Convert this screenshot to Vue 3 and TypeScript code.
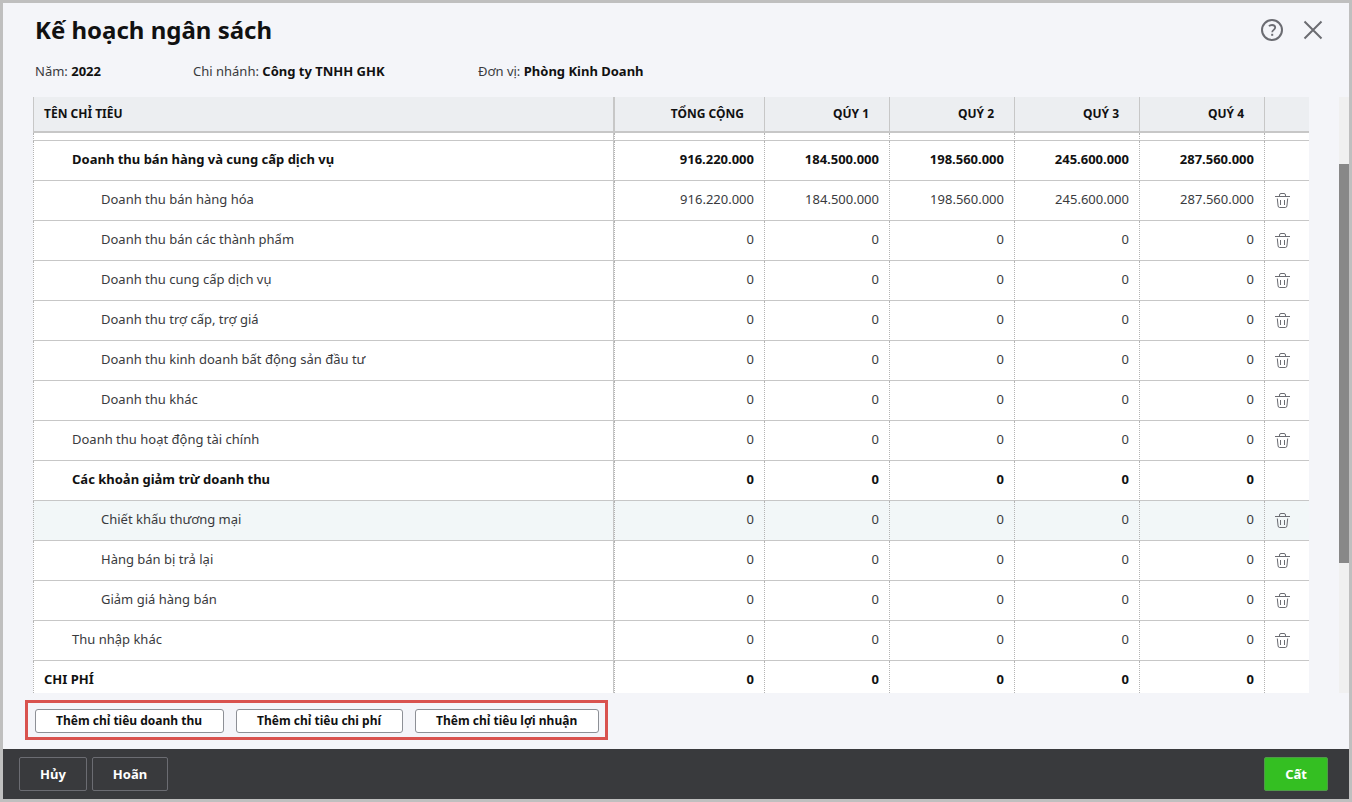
<script setup lang="ts">
interface Row {
  name: string
  level: 0 | 1 | 2
  values: string[]
  bold?: boolean
  active?: boolean
}

const zeros: string[] = ['0', '0', '0', '0', '0']
const sales: string[] = ['916.220.000', '184.500.000', '198.560.000', '245.600.000', '287.560.000']

const columns: string[] = ['TỔNG CỘNG', 'QÚY 1', 'QUÝ 2', 'QUÝ 3', 'QUÝ 4']

const rows: Row[] = [
  { name: 'Doanh thu bán hàng và cung cấp dịch vụ', level: 1, values: sales, bold: true },
  { name: 'Doanh thu bán hàng hóa', level: 2, values: sales },
  { name: 'Doanh thu bán các thành phẩm', level: 2, values: zeros },
  { name: 'Doanh thu cung cấp dịch vụ', level: 2, values: zeros },
  { name: 'Doanh thu trợ cấp, trợ giá', level: 2, values: zeros },
  { name: 'Doanh thu kinh doanh bất động sản đầu tư', level: 2, values: zeros },
  { name: 'Doanh thu khác', level: 2, values: zeros },
  { name: 'Doanh thu hoạt động tài chính', level: 1, values: zeros },
  { name: 'Các khoản giảm trừ doanh thu', level: 1, values: zeros, bold: true },
  { name: 'Chiết khấu thương mại', level: 2, values: zeros, active: true },
  { name: 'Hàng bán bị trả lại', level: 2, values: zeros },
  { name: 'Giảm giá hàng bán', level: 2, values: zeros },
  { name: 'Thu nhập khác', level: 1, values: zeros },
  { name: 'CHI PHÍ', level: 0, values: zeros, bold: true },
]

const addButtons: string[] = ['Thêm chỉ tiêu doanh thu', 'Thêm chỉ tiêu chi phí', 'Thêm chỉ tiêu lợi nhuận']
</script>

<template>
  <div class="window">
    <header class="titlebar">
      <h1>Kế hoạch ngân sách</h1>
      <div class="tools">
        <button type="button" class="icon-btn" aria-label="Trợ giúp">
          <svg width="24" height="24" viewBox="0 0 24 24" fill="none" stroke="#6b6c72" stroke-width="2">
            <circle cx="12" cy="12" r="10" />
            <path d="M9 8.3C9.5 7.6 10.5 7 12 7C14 7 15.2 8 15.2 9.6C15.2 11.8 12.2 11.9 12.2 14.2" stroke-width="1.8" />
            <path d="M12.2 15.8V17.8" />
          </svg>
        </button>
        <button type="button" class="icon-btn" aria-label="Đóng">
          <svg width="24" height="24" viewBox="0 0 24 24" fill="none" stroke="#6b6c72" stroke-width="2">
            <path d="M3.5 3.5L20.5 20.5M20.5 3.5L3.5 20.5" />
          </svg>
        </button>
      </div>
    </header>

    <div class="info">
      <span class="info-year">Năm: <b>2022</b></span>
      <span class="info-branch">Chi nhánh: <b>Công ty TNHH GHK</b></span>
      <span>Đơn vị: <b>Phòng Kinh Doanh</b></span>
    </div>

    <main class="content">
      <div class="table-view">
        <table>
          <colgroup>
            <col />
            <col class="col-total" />
            <col v-for="n in 4" :key="n" class="col-quarter" />
            <col class="col-action" />
          </colgroup>
          <thead>
            <tr>
              <th scope="col" class="name">TÊN CHỈ TIÊU</th>
              <th v-for="c in columns" :key="c" scope="col" class="num">{{ c }}</th>
              <th></th>
            </tr>
          </thead>
          <tbody>
            <tr class="clipped" aria-hidden="true">
              <td class="name"></td>
              <td v-for="n in 6" :key="n"></td>
            </tr>
            <tr v-for="row in rows" :key="row.name" :class="{ bold: row.bold, active: row.active }">
              <td class="name" :class="'level-' + row.level">{{ row.name }}</td>
              <td v-for="(v, i) in row.values" :key="i" class="num">{{ v }}</td>
              <td class="action">
                <button v-if="!row.bold" type="button" class="trash" :aria-label="'Xóa ' + row.name">
                  <svg width="15" height="15" viewBox="0 0 15 15" fill="none" stroke="#6b6c72">
                    <path d="M0 3.5H15M4.5 3.5V2Q4.5 0.5 6 0.5H9Q10.5 0.5 10.5 2V3.5" />
                    <path d="M2.3 5.5L3.1 13Q3.3 14.5 4.7 14.5H10.3Q11.7 14.5 11.9 13L12.7 5.5M5.5 7V12M9.5 7V12" />
                  </svg>
                </button>
              </td>
            </tr>
          </tbody>
        </table>
      </div>
      <div class="scrollbar"><div class="thumb"></div></div>
    </main>

    <div class="add-bar">
      <div class="add-group">
        <button v-for="b in addButtons" :key="b" type="button" class="add-btn">{{ b }}</button>
      </div>
    </div>

    <footer class="footer">
      <button type="button" class="foot-btn">Hủy</button>
      <button type="button" class="foot-btn">Hoãn</button>
      <button type="button" class="foot-btn save">Cất</button>
    </footer>
  </div>
</template>

<style>
body {
  margin: 0;
}
</style>

<style scoped>
.window {
  box-sizing: border-box;
  height: 100vh;
  display: flex;
  flex-direction: column;
  overflow: hidden;
  border: 3px solid #bfbfbf;
  background: #f4f5f9;
  color: #393a3d;
  font-family: "Noto Sans", sans-serif;
  font-size: 13px;
  line-height: 18px;
}

button {
  box-sizing: border-box;
  font: inherit;
  cursor: pointer;
}

.titlebar {
  display: flex;
  justify-content: space-between;
  align-items: center;
  height: 54px;
  padding: 0 24px 0 32px;
}

h1 {
  margin: 0;
  font-size: 24px;
  line-height: 32px;
  font-weight: 700;
  color: #111;
}

.tools {
  display: flex;
  gap: 17px;
}

.icon-btn,
.trash {
  display: block;
  padding: 0;
  border: 0;
  background: none;
}

svg {
  display: block;
}

.info {
  display: flex;
  padding: 5px 32px 17px;
}

.info-year {
  width: 158px;
}

.info-branch {
  width: 285px;
}

b {
  font-weight: 700;
  color: #111;
}

.content {
  flex: 1;
  min-height: 0;
  display: flex;
  gap: 30px;
  padding-left: 30px;
}

.table-view {
  flex: 1;
  min-width: 0;
  overflow: hidden;
  background: #fff;
}

table {
  width: 100%;
  table-layout: fixed;
  border-collapse: separate;
  border-spacing: 0;
}

.col-total {
  width: 150px;
}

.col-quarter {
  width: 125px;
}

.col-action {
  width: 45px;
}

th,
td {
  box-sizing: border-box;
  padding: 0 10px;
}

th {
  height: 36px;
  border-bottom: 2px solid #c7c7c7;
  border-left: 1px solid #c7c7c7;
  background: #eceef1;
  font-size: 12px;
  font-weight: 700;
  color: #111;
  text-align: left;
}

th.num {
  padding-right: 20px;
}

td {
  height: 40px;
  padding-bottom: 4px;
  border-bottom: 1px solid #c7c7c7;
  border-left: 1px dotted #b4b4b4;
}

.name {
  border-right: 1px solid #c7c7c7;
}

.num {
  text-align: right;
}

.level-1 {
  padding-left: 38px;
}

.level-2 {
  padding-left: 67px;
}

.clipped td {
  height: 8px;
  padding: 0;
}

.bold td {
  font-weight: 700;
  color: #111;
}

.active td {
  background: #f2f7f8;
}

.action {
  padding: 0 10px;
}

.scrollbar {
  width: 10px;
  display: flex;
  flex-direction: column;
  background: #f0f0f0;
}

.thumb {
  height: 67%;
  margin-top: 67px;
  background: #888;
}

.add-bar {
  display: flex;
  padding: 7px 22px 9px;
}

.add-group {
  display: flex;
  gap: 12px;
  padding: 6px 6px 4px 7px;
  border: 3px solid #d9534f;
}

.add-btn {
  height: 24px;
  padding: 0 21px 0 20px;
  border: 1px solid #8d9096;
  border-radius: 3px;
  background: #fff;
  color: #111;
  font-size: 12px;
  line-height: 18px;
  font-weight: 700;
}

.footer {
  display: flex;
  align-items: center;
  gap: 5px;
  height: 50px;
  padding: 0 21px 0 16px;
  background: #393a3d;
}

.foot-btn {
  height: 34px;
  padding: 0 20px;
  border: 1px solid #6b6c72;
  border-radius: 2px;
  background: transparent;
  color: #fff;
  font-weight: 700;
}

.save {
  margin-left: auto;
  border-color: #4f9a48;
  background: #34bf22;
}
</style>
